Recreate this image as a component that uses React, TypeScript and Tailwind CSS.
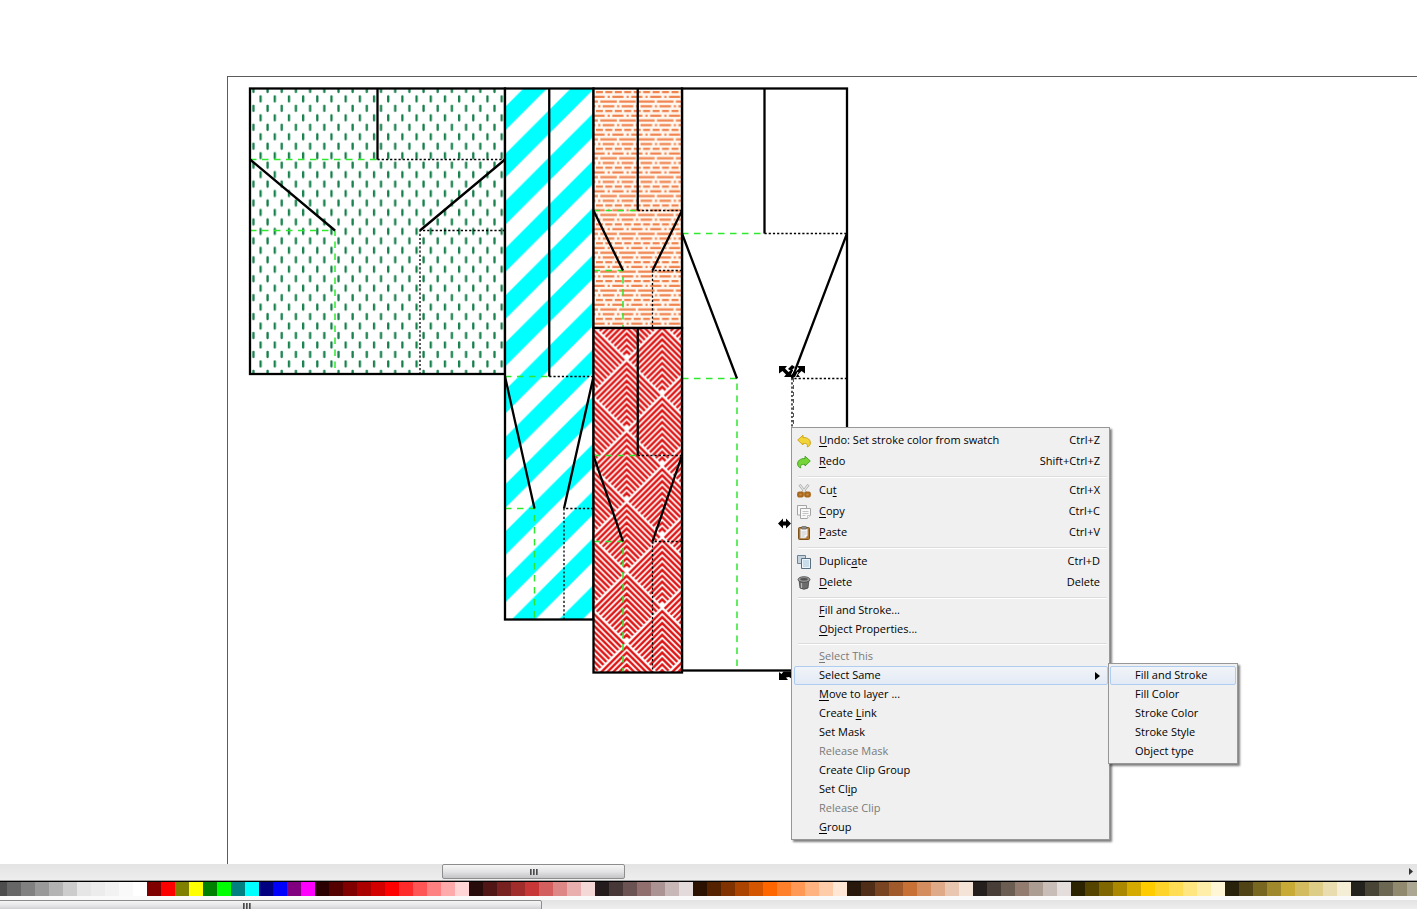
import { ReactNode } from "react";
import clsx from "clsx";

interface PanelProps {
  left: number;
  right: number;
  top: number;
  bottom: number;
  slit: number;
  fold: number;
  fill: string;
}

interface MenuItem {
  label: string;
  // the character drawn with an underline
  accel?: number;
  shortcut?: string;
  icon?: ReactNode;
  disabled?: boolean;
  active?: boolean;
  submenu?: boolean;
}

const panels: PanelProps[] = [
  { left: 250, right: 505, top: 88.5, bottom: 374, slit: 159.5, fold: 230.5, fill: "url(#dashes)" },
  { left: 505, right: 593.5, top: 88.5, bottom: 619.5, slit: 376.5, fold: 508.5, fill: "url(#stripes)" },
  { left: 682, right: 847, top: 88.5, bottom: 670.5, slit: 233.5, fold: 378.5, fill: "white" },
  { left: 593.5, right: 682, top: 88.5, bottom: 328, slit: 210.5, fold: 270.5, fill: "url(#bricks)" },
  { left: 593.5, right: 682, top: 328, bottom: 672.5, slit: 455.5, fold: 541.5, fill: "url(#herringbone)" },
];

const palette = [
  "4d4d4d 666666 808080 999999 b3b3b3 cccccc e6e6e6 ececec f2f2f2 f9f9f9 ffffff",
  "800000 ff0000 808000 ffff00 008000 00ff00 008080 00ffff 000080 0000ff 800080 ff00ff",
  "2b0000 550000 800000 aa0000 d40000 ff0000 ff2a2a ff5555 ff8080 ffaaaa ffd5d5",
  "280b0b 501616 782121 a02c2c c83737 d35f5f de8787 e9afaf f4d7d7",
  "241c1c 483737 6c5353 916f6f ac9393 c8b7b7 e3dbdb",
  "2b1100 552200 803300 aa4400 d45500 ff6600 ff7f2a ff9955 ffb380 ffccaa ffe6d5",
  "28170b 502d16 784421 a05a2c c87137 d38d5f deaa87 e9c6af f4e3d7",
  "241f1c 483e37 6c5d53 917c6f ac9d93 c8beb7 e3dedb",
  "2b2200 554400 806600 aa8800 d4aa00 ffcc00 ffd42a ffdd55 ffe680 ffeeaa fff6d5",
  "28220b 504416 786721 a0892c c8ab37 d3bc5f decd87 e9ddaf f4eed7",
  "24221c 484537 6c6753 918a6f aca793 c8c4b7 e3e2db",
]
  .join(" ")
  .split(" ");

// chevrons that fill one diamond, apex column at cx and top corner at y
const chevrons = (cx: number, y: number) => {
  const size = 70.9;
  let d = "";
  for (let k = 0; k < 11; k++) {
    const a = 4.6 + k * 5.91;
    const dx = (size - a) / 2 - 0.2;
    d += `M${cx - dx} ${y + a + dx}L${cx} ${y + a}L${cx + dx} ${y + a + dx}`;
  }
  return d;
};

const Panel = ({ left, right, top, bottom, slit, fold, fill }: PanelProps) => {
  const mid = (left + right) / 2;
  const third = (right - left) / 3;
  return (
    <g fill="none">
      <rect x={left} y={top} width={right - left} height={bottom - top} fill={fill} />
      <g stroke="#2ee82e" strokeWidth="1.5" strokeDasharray="6.5 5.5">
        <path d={`M${left} ${slit}H${mid}`} />
        <path d={`M${left} ${fold}H${left + third}V${bottom}`} />
      </g>
      <g stroke="black" strokeWidth="1.3" strokeDasharray="2.2 2">
        <path d={`M${mid} ${slit}H${right}`} />
        <path d={`M${right} ${fold}H${right - third}V${bottom}`} />
      </g>
      <g stroke="black" strokeWidth="2.3">
        <rect x={left} y={top} width={right - left} height={bottom - top} />
        <path d={`M${mid} ${top}V${slit}`} />
        <path d={`M${left} ${slit}L${left + third} ${fold}M${right} ${slit}L${right - third} ${fold}`} />
      </g>
    </g>
  );
};

const Drawing = () => (
  <svg className="absolute left-0 top-0" width="860" height="690" aria-label="Pattern drawing">
    <defs>
      <pattern id="dashes" patternUnits="userSpaceOnUse" x="250" y="85" width="14.18" height="18.93">
        <rect width="14.18" height="18.93" fill="white" />
        <path d="M3.4 1.8v5.2M10.6 11.3v5.2" stroke="#167f4b" strokeWidth="2.3" strokeLinecap="round" />
      </pattern>
      <pattern id="stripes" patternUnits="userSpaceOnUse" x="505" y="107" width="47.2" height="47.2">
        <rect width="47.2" height="47.2" fill="white" />
        <path d="M0 0H23.6L0 23.6zM47.2 0V23.6L23.6 47.2H0z" fill="#00ffff" />
      </pattern>
      <pattern id="bricks" patternUnits="userSpaceOnUse" x="594" y="90" width="18.9" height="18.9">
        <rect width="18.9" height="18.9" fill="#fff8f0" />
        <path
          d="M1.9 2.2h7M11.3 2.2h7M0 6.9h10.6M18.3 6.9h.6M13.6 6.9h2.2M0 11.6h3.9M6.3 11.6h12.6M4.2 16.3h2.2M8.7 16.3h10.2M0 16.3h1.4"
          stroke="#f08450"
          strokeWidth="2.3"
        />
      </pattern>
      <pattern id="herringbone" patternUnits="userSpaceOnUse" x="591.3" y="358.5" width="70.9" height="70.9">
        <rect width="70.9" height="70.9" fill="white" />
        <path
          d={
            chevrons(35.45, 0) +
            chevrons(0, -35.45) +
            chevrons(70.9, -35.45) +
            chevrons(0, 35.45) +
            chevrons(70.9, 35.45)
          }
          fill="none"
          stroke="#de1212"
          strokeWidth="2.4"
        />
      </pattern>
    </defs>
    {panels.map((panel) => (
      <Panel key={panel.fill} {...panel} />
    ))}
    <path d="M793.5 378V440" stroke="#555" strokeDasharray="4 3" />
    {/* selection handles */}
    <path d="M779 366h8l-2 2.500 3.500 3.500 3.500-2.500v7.500h-8l2-2.500-3.500-3.500-3.500 2.500z" />
    <path d="M805 366h-8l2 2.500-3.500 3.500-3.500-2.500v7.500h8l-2-2.500 3.500-3.500 3.500 2.500z" />
    <path d="M788 369l4-4 3 2-4 4z" />
    <path d="M791.500 374.500l2.500-5M795.500 377l2.500-5" stroke="white" />
    <path d="M778 523.500l5-5v3h3v-3l5 5-5 5v-3h-3v3z" />
    <path d="M779 680v-8l2.500 2 2-2.500h8v7l-2.500-1.500-3 .5 2 2.500z" />
  </svg>
);

const UndoIcon = () => (
  <svg width="14" height="14" viewBox="0 0 14 14">
    <path
      d="M.7 6L6 1.200v2.300c5 0 7.500 2.300 7.400 5.500-.1 2.200-1.500 3.600-3.200 3.900.8-2.500 0-3.600-4.200-3.500V11z"
      fill="#f2d338"
      stroke="#c9a010"
      strokeWidth=".9"
      strokeLinejoin="round"
    />
  </svg>
);

const RedoIcon = () => (
  <svg width="14" height="14" viewBox="0 0 14 14">
    <path
      d="M13.300 6L8 1.200v2.300C3 3.500.5 5.800.6 9c.1 2.200 1.500 3.600 3.200 3.900C3 10.400 3.800 9.300 8 9.400V11z"
      fill="#76d438"
      stroke="#3f9f1c"
      strokeWidth=".9"
      strokeLinejoin="round"
    />
  </svg>
);

const CutIcon = () => (
  <svg width="14" height="14" viewBox="0 0 14 14" fill="none">
    <path d="M2.500.8L9 9M11.500.8L5 9" stroke="#9c9f9d" strokeWidth="2.6" />
    <path d="M2.700 1L9 9M11.300 1L5 9" stroke="#e4e6e4" strokeWidth="1.3" />
    <rect x="1.200" y="8.500" width="4.600" height="4" rx="1.200" stroke="#a8681c" strokeWidth="2.2" fill="#c98a40" />
    <rect x="8.200" y="8.500" width="4.600" height="4" rx="1.200" stroke="#a8681c" strokeWidth="2.2" fill="#c98a40" />
  </svg>
);

const CopyIcon = () => (
  <svg width="14" height="14" viewBox="0 0 14 14" fill="#f8f8f8" stroke="#a4a4a4">
    <path d="M.5.5h9v9.500h-9z" />
    <path d="M3.500 3.500h10v7l-3 3h-7z" />
    <path d="M5.500 6.500h6M5.500 8.500h6M5.500 10.500h3M10.500 13.500v-3h3" stroke="#c4c4c4" />
  </svg>
);

const PasteIcon = () => (
  <svg width="14" height="14" viewBox="0 0 14 14">
    <rect x="1.500" y="1.500" width="11" height="12" rx="1" fill="#b07a35" stroke="#7d5118" />
    <path d="M3.500 3h7v6.500l-2 2.500h-5z" fill="#f4f4f4" stroke="#c8c8c8" strokeWidth=".6" />
    <path d="M4.500 6h5M4.500 8h5M4.500 10h3" stroke="#b8b8b8" strokeWidth=".7" />
    <rect x="4.500" y=".5" width="5" height="2.500" rx=".8" fill="#8a8a88" stroke="#5e5e5c" strokeWidth=".7" />
  </svg>
);

const DuplicateIcon = () => (
  <svg width="14" height="14" viewBox="0 0 14 14" stroke="#6d8292">
    <path d="M.5.5h8v8h-8z" fill="#c3d2dd" />
    <path d="M4.500 3.500h9v10h-9z" fill="#c9dcea" stroke="#5a6f7f" />
    <path d="M5.500 4.500h7v8h-7z" fill="none" stroke="#eef5fa" />
  </svg>
);

const DeleteIcon = () => (
  <svg width="14" height="14" viewBox="0 0 14 14">
    <path d="M2 3.500h10l-1 8.500q-4 2.500-8 0z" fill="#6c6c6c" stroke="#444" strokeWidth=".8" />
    <path d="M4.500 7v5" stroke="#b5b5b5" strokeWidth="1.2" />
    <ellipse cx="7" cy="3.500" rx="6" ry="2.800" fill="#9a9a9a" stroke="#444" strokeWidth=".8" />
    <ellipse cx="7" cy="3.300" rx="3.800" ry="1.200" fill="#555" />
  </svg>
);

const menuGroups: MenuItem[][] = [
  [
    { label: "Undo: Set stroke color from swatch", accel: 0, shortcut: "Ctrl+Z", icon: <UndoIcon /> },
    { label: "Redo", accel: 0, shortcut: "Shift+Ctrl+Z", icon: <RedoIcon /> },
  ],
  [
    { label: "Cut", accel: 2, shortcut: "Ctrl+X", icon: <CutIcon /> },
    { label: "Copy", accel: 0, shortcut: "Ctrl+C", icon: <CopyIcon /> },
    { label: "Paste", accel: 0, shortcut: "Ctrl+V", icon: <PasteIcon /> },
  ],
  [
    { label: "Duplicate", accel: 6, shortcut: "Ctrl+D", icon: <DuplicateIcon /> },
    { label: "Delete", accel: 0, shortcut: "Delete", icon: <DeleteIcon /> },
  ],
  [
    { label: "Fill and Stroke...", accel: 0 },
    { label: "Object Properties...", accel: 0 },
  ],
  [
    { label: "Select This", accel: 0, disabled: true },
    { label: "Select Same", active: true, submenu: true },
    { label: "Move to layer ...", accel: 0 },
    { label: "Create Link", accel: 7 },
    { label: "Set Mask" },
    { label: "Release Mask", disabled: true },
    { label: "Create Clip Group" },
    { label: "Set Clip", accel: 6 },
    { label: "Release Clip", disabled: true },
    { label: "Group", accel: 0 },
  ],
];

const submenuItems: MenuItem[] = [
  { label: "Fill and Stroke", active: true },
  { label: "Fill Color" },
  { label: "Stroke Color" },
  { label: "Stroke Style" },
  { label: "Object type" },
];

const MenuLabel = ({ label, accel }: { label: string; accel?: number }) => {
  if (accel === undefined) return <span>{label}</span>;
  return (
    <span>
      {label.slice(0, accel)}
      <span className="underline underline-offset-2">{label[accel]}</span>
      {label.slice(accel + 1)}
    </span>
  );
};

const MenuRow = ({ item }: { item: MenuItem }) => (
  <button
    type="button"
    role="menuitem"
    disabled={item.disabled}
    aria-haspopup={item.submenu ? "menu" : undefined}
    className={clsx(
      "flex w-full items-center rounded-xs border pr-[7px] text-left whitespace-nowrap",
      item.icon ? "h-[21px]" : "h-[19px]",
      item.active
        ? "border-[#aeccf0] bg-linear-to-b from-[#f1f4f8] to-[#e3eaf5]"
        : "border-transparent",
      item.disabled && "text-[#7a7a7a]"
    )}
  >
    <span className="w-6 shrink-0 pl-0.5">{item.icon}</span>
    <MenuLabel label={item.label} accel={item.accel} />
    <span className="ml-auto">{item.shortcut}</span>
    {item.submenu && (
      <svg width="5" height="8" viewBox="0 0 5 8">
        <path d="M0 0l5 4-5 4z" />
      </svg>
    )}
  </button>
);

const menuBox =
  "absolute border border-[#979797] bg-[#f0f0f0] shadow-[2px_2px_2px_rgba(0,0,0,0.5)]";

const ContextMenu = () => (
  <div role="menu" className={clsx(menuBox, "left-[791px] top-[427px] w-[319px] p-0.5 pr-px")}>
    {menuGroups.map((group, index) => (
      <div
        key={index}
        className={clsx(index > 0 && "relative pt-2")}
      >
        {index > 0 && (
          <div role="separator" className="absolute top-1 right-px left-1 h-0.5 border-t border-[#dcdcdc] bg-white" />
        )}
        {group.map((item) => (
          <MenuRow key={item.label} item={item} />
        ))}
      </div>
    ))}
  </div>
);

const Submenu = () => (
  <div role="menu" className={clsx(menuBox, "left-[1108px] top-[663px] w-[130px] p-px pt-0.5 pb-0.5")}>
    {submenuItems.map((item) => (
      <MenuRow key={item.label} item={item} />
    ))}
  </div>
);

const Grip = () => (
  <span className="flex gap-px">
    {[0, 1, 2].map((i) => (
      <span key={i} className="h-1.5 w-0.5 bg-linear-to-r from-[#333] to-[#999]" />
    ))}
  </span>
);

const thumb =
  "flex shrink-0 items-center justify-center rounded-xs border border-[#8d8d8d] bg-linear-to-b from-[#f6f6f6] via-[#e4e4e6] to-[#c4c4c8]";

const App = () => {
  return (
    <div className="flex h-screen flex-col overflow-hidden bg-white font-['Open_Sans','Noto_Sans',sans-serif] text-[11px] text-black">
      <main className="relative min-h-0 flex-1 overflow-hidden pt-[76px] pl-[227px]">
        <div className="h-full border-t border-l border-[#5c5c5c]" />
        <Drawing />
        <ContextMenu />
        <Submenu />
      </main>

      <div className="flex h-[17px] shrink-0 border-b border-[#a0a0a0] bg-linear-to-b from-[#e3e3e3] to-[#eeeeee] pb-px pl-[442px]">
        <button type="button" aria-label="Scroll canvas" className={clsx(thumb, "w-[183px]")}>
          <Grip />
        </button>
        <button type="button" aria-label="Scroll right" className="ml-auto flex w-3 items-center justify-center">
          <svg width="4" height="7" viewBox="0 0 4 7">
            <path d="M0 0l4 3.500L0 7z" fill="#333" />
          </svg>
        </button>
      </div>

      <div className="flex h-[19px] shrink-0 overflow-hidden border-t border-black bg-[#fafafa] pb-1">
        {palette.map((color, index) => (
          <button
            key={index}
            type="button"
            aria-label={`#${color}`}
            className={clsx("shrink-0", index === 0 ? "w-[7px]" : "w-3.5")}
            style={{ backgroundColor: `#${color}` }}
          />
        ))}
      </div>

      <div className="h-[9px] shrink-0 overflow-hidden bg-linear-to-b from-[#e3e3e3] to-[#eeeeee]">
        <button type="button" aria-label="Scroll palette" className={clsx(thumb, "-ml-12 h-3 w-[590px]")}>
          <Grip />
        </button>
      </div>
    </div>
  );
};
export default App;
